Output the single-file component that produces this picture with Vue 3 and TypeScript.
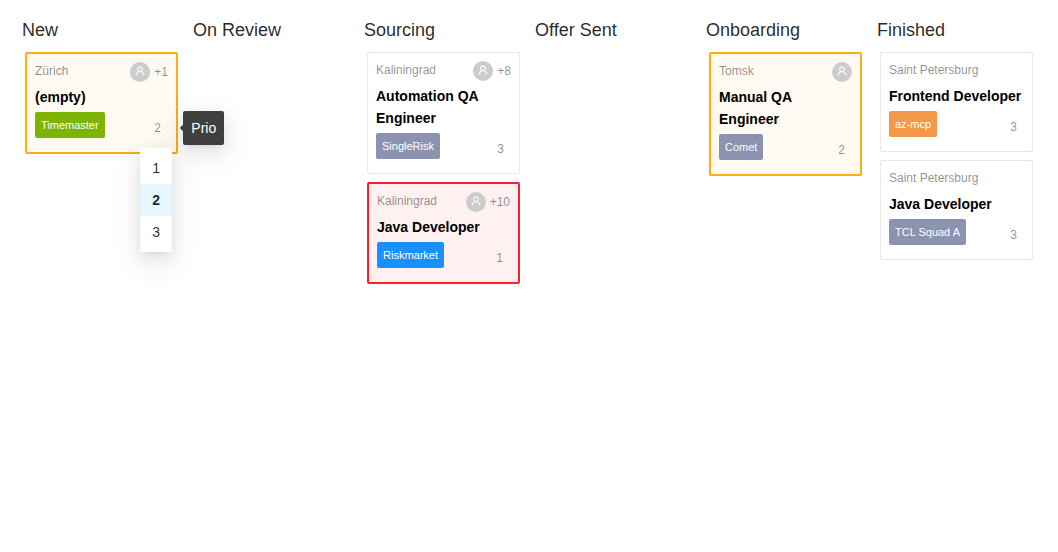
<script setup lang="ts">
interface Card {
  city: string
  title: string
  tag: string
  color: string
  prio: number
  avatar?: boolean
  more?: string
  tone?: 'warn' | 'danger'
  open?: boolean
}

interface Column {
  name: string
  cards: Card[]
}

const priorities: number[] = [1, 2, 3]

const columns: Column[] = [
  {
    name: 'New',
    cards: [
      { city: 'Zürich', title: '(empty)', tag: 'Timemaster', color: '#7cb305', prio: 2, avatar: true, more: '+1', tone: 'warn', open: true },
    ],
  },
  { name: 'On Review', cards: [] },
  {
    name: 'Sourcing',
    cards: [
      { city: 'Kaliningrad', title: 'Automation QA Engineer', tag: 'SingleRisk', color: '#8c93b0', prio: 3, avatar: true, more: '+8' },
      { city: 'Kaliningrad', title: 'Java Developer', tag: 'Riskmarket', color: '#1890ff', prio: 1, avatar: true, more: '+10', tone: 'danger' },
    ],
  },
  { name: 'Offer Sent', cards: [] },
  {
    name: 'Onboarding',
    cards: [
      { city: 'Tomsk', title: 'Manual QA Engineer', tag: 'Comet', color: '#8c93b0', prio: 2, avatar: true, tone: 'warn' },
    ],
  },
  {
    name: 'Finished',
    cards: [
      { city: 'Saint Petersburg', title: 'Frontend Developer', tag: 'az-mcp', color: '#f4994a', prio: 3 },
      { city: 'Saint Petersburg', title: 'Java Developer', tag: 'TCL Squad A', color: '#8c93b0', prio: 3 },
    ],
  },
]
</script>

<template>
  <main class="board">
    <section v-for="column in columns" :key="column.name" class="column">
      <h2 class="heading">{{ column.name }}</h2>
      <div class="cards">
        <article v-for="card in column.cards" :key="card.title" class="card" :class="card.tone">
          <header class="top">
            <span class="city">{{ card.city }}</span>
            <span class="people">
              <span v-if="card.avatar" class="avatar">
                <svg viewBox="64 64 896 896" width="10" height="10" fill="currentColor" stroke="currentColor" stroke-width="24" aria-hidden="true">
                  <path d="M858.5 763.6a374 374 0 0 0-80.6-119.5 375.63 375.63 0 0 0-119.5-80.6c-.4-.2-.8-.3-1.2-.5C719.5 518 760 444.7 760 362c0-137-111-248-248-248S264 225 264 362c0 82.7 40.5 156 102.8 201.1-.4.2-.8.3-1.2.5-44.8 18.9-85 46-119.5 80.6a375.63 375.63 0 0 0-80.6 119.5A371.7 371.7 0 0 0 136 901.8a8 8 0 0 0 8 8.2h60c4.4 0 7.9-3.5 8-7.8 2-77.2 33-149.5 87.8-204.3 56.7-56.7 132-87.9 212.2-87.9s155.5 31.2 212.2 87.9C779 752.7 810 825 812 902.2c.1 4.4 3.6 7.8 8 7.8h60a8 8 0 0 0 8-8.2c-1-47.8-10.9-94.3-29.5-138.2zM512 534c-45.9 0-89.1-17.9-121.6-50.4S340 407.9 340 362c0-45.9 17.9-89.1 50.4-121.6S466.1 190 512 190s89.1 17.9 121.6 50.4S684 316.1 684 362c0 45.9-17.9 89.1-50.4 121.6S557.9 534 512 534z" />
                </svg>
              </span>
              <span v-if="card.more" class="more">{{ card.more }}</span>
            </span>
          </header>
          <h3 class="title">{{ card.title }}</h3>
          <footer class="bottom">
            <span class="tag" :style="{ backgroundColor: card.color }">{{ card.tag }}</span>
            <span class="prio">
              {{ card.prio }}
              <span v-if="card.open" class="tooltip" role="tooltip">Prio</span>
              <ul v-if="card.open" class="menu">
                <li v-for="p in priorities" :key="p" class="option" :class="{ selected: p === card.prio }">{{ p }}</li>
              </ul>
            </span>
          </footer>
        </article>
      </div>
    </section>
  </main>
</template>

<style>
body {
  background: #fff;
}
</style>

<style scoped>
.board {
  display: grid;
  grid-template-columns: repeat(6, 171px);
  padding: 16px 0 0 22px;
  box-sizing: border-box;
  height: 552px;
  overflow: hidden;
  font-family: 'Liberation Sans', Arial, sans-serif;
  font-size: 14px;
  color: rgba(0, 0, 0, 0.85);
}
.heading {
  margin: 0;
  font-size: 18px;
  font-weight: 400;
  line-height: 28px;
}
.cards {
  display: flex;
  flex-direction: column;
  gap: 8px;
  width: 153px;
  margin: 8px 0 0 3px;
}
.card {
  padding: 8px;
  background: #fff;
  border: 1px solid #e8e8e8;
  border-radius: 2px;
}
.card.warn {
  border: 2px solid #faad14;
  background: #fffaf2;
}
.card.danger {
  border: 2px solid #f5222d;
  background: #fff1f1;
}
.top {
  display: flex;
  justify-content: space-between;
  height: 24px;
  font-size: 12px;
  color: rgba(0, 0, 0, 0.45);
}
.city {
  line-height: 18px;
}
.people {
  display: flex;
  gap: 4px;
  line-height: 20px;
}
.avatar {
  display: flex;
  align-items: center;
  justify-content: center;
  width: 20px;
  height: 20px;
  padding-bottom: 2px;
  box-sizing: border-box;
  border-radius: 50%;
  background: #ccc;
  color: #fff;
}
.title {
  margin: 0;
  font-size: 14px;
  font-weight: 700;
  line-height: 22px;
  color: #000;
}
.bottom {
  display: flex;
  justify-content: space-between;
  align-items: flex-start;
  padding: 4px 7px 6px 0;
}
.tag {
  padding: 0 6px;
  border-radius: 2px;
  font-size: 11px;
  line-height: 26px;
  color: #fff;
}
.prio {
  position: relative;
  margin-top: 6px;
  font-size: 12px;
  line-height: 20px;
  color: rgba(0, 0, 0, 0.45);
}
.tooltip,
.menu {
  position: absolute;
  border-radius: 2px;
  font-size: 14px;
  box-shadow: 0 3px 6px -4px rgba(0, 0, 0, 0.12), 0 6px 16px 0 rgba(0, 0, 0, 0.08), 0 9px 28px 8px rgba(0, 0, 0, 0.05);
}
.tooltip {
  left: 29px;
  top: -7px;
  padding: 6px 8px;
  line-height: 22px;
  color: #fff;
  background: #404040;
}
.tooltip::before {
  content: '';
  position: absolute;
  left: -2px;
  top: 14px;
  width: 6px;
  height: 6px;
  background: #404040;
  transform: rotate(45deg);
}
.menu {
  left: -14px;
  top: 30px;
  width: 32px;
  margin: 0;
  padding: 4px 0;
  box-sizing: border-box;
  list-style: none;
  background: #fff;
  color: rgba(0, 0, 0, 0.85);
}
.option {
  padding: 5px 12px;
  line-height: 22px;
}
.option.selected {
  font-weight: 600;
  background: #e6f7ff;
}
</style>
